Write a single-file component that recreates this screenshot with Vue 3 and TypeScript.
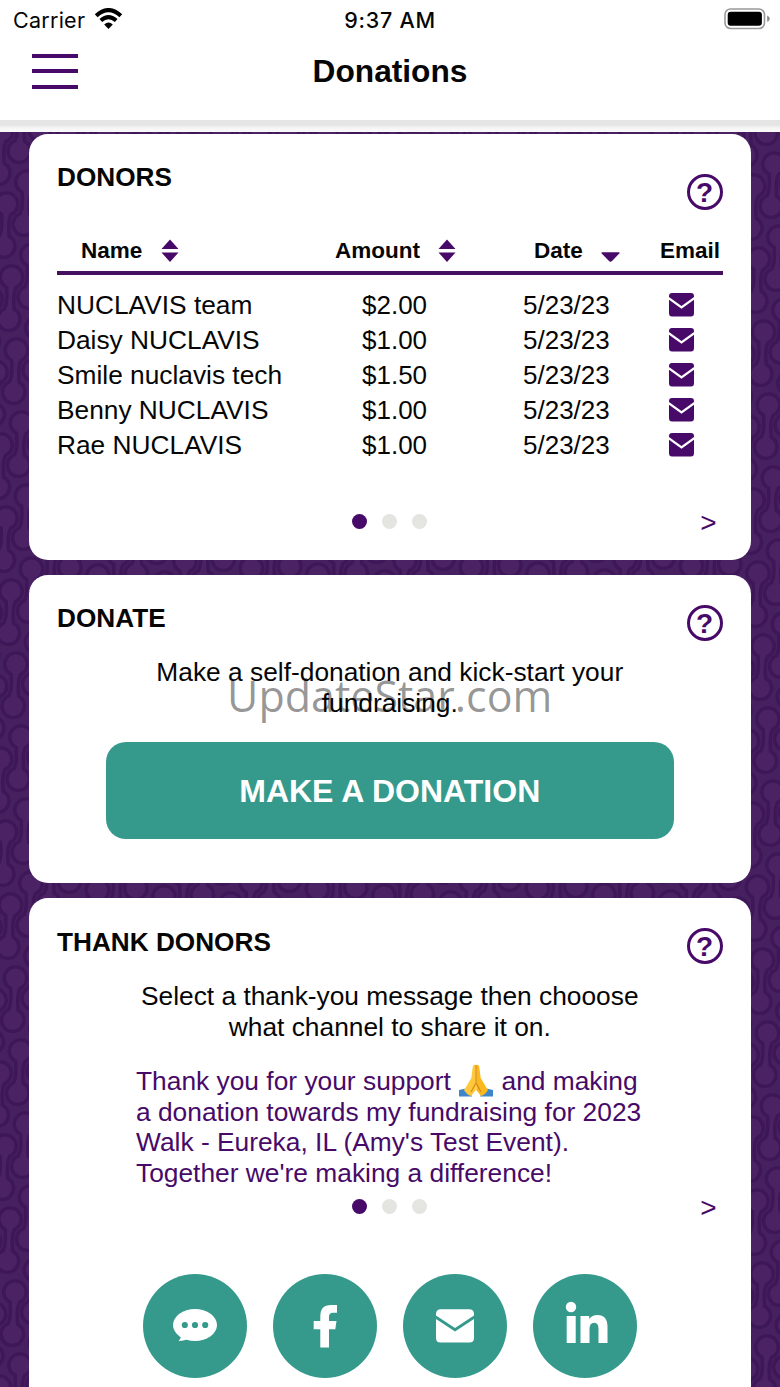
<script setup lang="ts">
interface Donor {
  name: string
  amount: string
  date: string
}

interface Point {
  x: number
  y: number
}

const donors: Donor[] = [
  { name: 'NUCLAVIS team', amount: '$2.00', date: '5/23/23' },
  { name: 'Daisy NUCLAVIS', amount: '$1.00', date: '5/23/23' },
  { name: 'Smile nuclavis tech', amount: '$1.50', date: '5/23/23' },
  { name: 'Benny NUCLAVIS', amount: '$1.00', date: '5/23/23' },
  { name: 'Rae NUCLAVIS', amount: '$1.00', date: '5/23/23' },
]

// Slanted lattice of chain links covering the backdrop.
const links: Point[] = []
for (let i = -10; i <= 55; i++) {
  for (let j = -10; j <= 40; j++) {
    const x = 12 + i * 20.5 + j * 5
    const y = 620 - i * 22 + (j - 9) * 73
    if (x > -20 && x < 800 && y > 70 && y < 1410) links.push({ x, y })
  }
}
</script>

<template>
  <div class="screen">
    <svg class="backdrop" width="780" height="1387" aria-hidden="true">
      <defs>
        <path id="link" d="M-4.800 10.200A11.200 11.200 0 1 1 4.600 10.300Q2.200 15 2.200 21T2.600 32.300A11.200 11.200 0 1 1-7 31.800Q-4.600 27-4.600 21T-4.800 10.200Z" />
      </defs>
      <rect width="780" height="1387" fill="#472060" />
      <g fill="#4b2364" stroke="#3e1758" stroke-width="3.400" stroke-linejoin="round">
        <use v-for="(p, n) in links" :key="n" href="#link" :x="p.x" :y="p.y" />
      </g>
    </svg>

    <header class="top">
      <div class="status">
        <span class="carrier">Carrier
          <svg class="wifi" width="29" height="22" viewBox="0 0 29 22">
            <path d="M2.200 7.700Q14.500-3.400 26.800 7.700" fill="none" stroke="#000" stroke-width="4.200" />
            <path d="M6.800 12.500Q14.500 5.800 22.200 12.500" fill="none" stroke="#000" stroke-width="4" />
            <path d="M10.200 16.500Q14.500 12.700 18.800 16.500L14.500 21Z" />
          </svg>
        </span>
        <span class="clock">9:37 AM</span>
        <svg class="battery" width="47" height="22" viewBox="0 0 47 22">
          <rect x="1" y="1" width="39.500" height="19.500" rx="5.500" fill="#fff" stroke="#999" stroke-width="1.600" />
          <rect x="3.700" y="3.700" width="34.200" height="14" rx="3" />
          <path d="M43.200 7.500Q45.800 8.700 45.800 10.800T43.200 14Z" fill="#888" />
        </svg>
      </div>
      <div class="bar">
        <div class="menu"><i /><i /><i /></div>
        <h1>Donations</h1>
      </div>
    </header>
    <div class="edge" />

    <main>
      <section class="card donors">
        <div class="head"><h2>DONORS</h2><span class="help">?</span></div>
        <div class="cols labels">
          <span class="first">Name
            <svg class="sort" width="18" height="24" viewBox="0 0 18 24"><path d="M9 .5L17.500 10H.5ZM.5 13.500H17.500L9 23Z" /></svg>
          </span>
          <span>Amount
            <svg class="sort" width="18" height="24" viewBox="0 0 18 24"><path d="M9 .5L17.500 10H.5ZM.5 13.500H17.500L9 23Z" /></svg>
          </span>
          <span>Date
            <svg class="sort" width="19" height="24" viewBox="0 0 19 24"><path d="M1 13.200H18Q19 13.500 18.300 14.500L11 22Q9.500 23.500 8 22L.7 14.500Q0 13.500 1 13.200Z" /></svg>
          </span>
          <span>Email</span>
        </div>
        <div class="rows">
          <div v-for="d in donors" :key="d.name" class="cols row">
            <span class="name">{{ d.name }}</span>
            <span>{{ d.amount }}</span>
            <span>{{ d.date }}</span>
            <svg class="mail" width="25" height="24" viewBox="0 0 25 24">
              <path d="M3 0H22Q25 0 25 3V4L12.500 13 0 4V3Q0 0 3 0ZM0 6.700L12.500 15.800 25 6.700V20Q25 23.500 22 23.500H3Q0 23.500 0 20Z" />
            </svg>
          </div>
        </div>
        <div class="pager"><div class="dots"><i class="on" /><i /><i /></div><span>&gt;</span></div>
      </section>

      <section class="card donate">
        <div class="head"><h2>DONATE</h2><span class="help">?</span></div>
        <p class="lead">Make a self-donation and kick-start your<br>fundraising.</p>
        <button type="button">MAKE A DONATION</button>
        <div class="watermark">UpdateStar.com</div>
      </section>

      <section class="card thank">
        <div class="head"><h2>THANK DONORS</h2><span class="help">?</span></div>
        <p class="lead">Select a thank-you message then chooose<br>what channel to share it on.</p>
        <p class="message">Thank you for your support
          <svg class="hands" width="34" height="33" viewBox="0 0 34 33" role="img" aria-label="Folded hands">
            <path d="M0 26L9 24 13 32.500H0ZM34 26L25 24 21 32.500H34Z" fill="#3f86c9" />
            <path d="M16.800 1Q14 0 13.600 4L12.300 14 7 23 5 26Q8 31 12 32L16.800 26Z" fill="#ffc83d" />
            <path d="M17.200 1Q20 0 20.400 4L21.700 14 27 23 29 26Q26 31 22 32L17.200 26Z" fill="#fbb91f" />
            <path d="M17 1V19L12 28M17 19L22 28" fill="none" stroke="#d78b16" stroke-width="1.200" />
          </svg>
          and making<br>a donation towards my fundraising for 2023<br>Walk - Eureka, IL (Amy's Test Event).<br>Together we're making a difference!</p>
        <div class="pager"><div class="dots"><i class="on" /><i /><i /></div><span>&gt;</span></div>
        <div class="share">
          <span>
            <svg width="104" height="104" viewBox="0 0 104 104">
              <ellipse cx="52" cy="51" rx="22" ry="16" fill="#fff" />
              <path d="M38 60Q38.500 64 35.500 67Q42 67 46 64Z" fill="#fff" />
              <g fill="#359a8c"><circle cx="41.800" cy="51" r="3.100" /><circle cx="52" cy="51" r="3.100" /><circle cx="62.200" cy="51" r="3.100" /></g>
            </svg>
          </span>
          <span>
            <svg width="104" height="104" viewBox="0 0 104 104">
              <path d="M47.300 73.500V55.200H40.700V47H47.300V42Q47.300 31 58 31H64V38.700H60Q56 38.700 56 42.500V47H63.500L62.300 55.200H56V73.500Z" fill="#fff" />
            </svg>
          </span>
          <span>
            <svg width="104" height="104" viewBox="0 0 104 104">
              <path d="M38 35.200H66Q71 35.200 71 40V41.500L52 54 33 41.500V40Q33 35.200 38 35.200ZM33 45L52 57.500 71 45V64Q71 68.500 66.500 68.500H37.500Q33 68.500 33 64Z" fill="#fff" />
            </svg>
          </span>
          <span>
            <svg width="104" height="104" viewBox="0 0 104 104">
              <circle cx="38" cy="33" r="5.200" fill="#fff" />
              <path d="M33.700 42H42.700V69H33.700ZM47.500 42H56.200V45Q59 41 64.500 41Q74.500 41 74.500 53V69H65.500V55Q65.500 48.800 61.200 48.800Q56.500 48.800 56.500 55V69H47.500Z" fill="#fff" />
            </svg>
          </span>
        </div>
      </section>
    </main>
  </div>
</template>

<style>
html,
body {
  margin: 0;
  overflow: hidden;
}
</style>

<style scoped>
.screen {
  position: relative;
  width: 780px;
  height: 1387px;
  overflow: hidden;
  font-family: "Liberation Sans", Arial, sans-serif;
  color: #060606;
}
.backdrop {
  position: absolute;
  inset: 0;
  z-index: -1;
}
h1, h2, p {
  margin: 0;
}
.top {
  height: 120px;
  background: #fff;
}
.status {
  display: grid;
  grid-template-columns: 1fr auto 1fr;
  height: 40px;
  padding: 0 9px 0 13px;
  line-height: 40px;
  font-family: Inter, sans-serif;
  font-size: 21.500px;
  box-sizing: border-box;
}
.carrier {
  display: flex;
  gap: 8.500px;
  letter-spacing: 0.250px;
}
.wifi {
  margin-top: 8px;
}
.clock {
  margin-right: 4px;
  font-weight: 500;
  letter-spacing: 0.750px;
}
.battery {
  justify-self: end;
  margin-top: 8px;
}
.bar {
  display: grid;
  grid-template-columns: 1fr auto 1fr;
  padding: 14px 32px 0;
}
.menu {
  display: flex;
  flex-direction: column;
  gap: 11.500px;
  width: 45.500px;
}
.menu i {
  height: 3.900px;
  background: #470a68;
}
h1 {
  margin-top: -1px;
  font-size: 31.700px;
  line-height: 36px;
}
.edge {
  height: 11.500px;
  background: linear-gradient(#e5e5e5 0 42%, #f5f5f5 65%, #fafafa);
}
main {
  display: flex;
  flex-direction: column;
  gap: 15px;
  padding: 2px 29px 0 28.500px;
}
.card {
  position: relative;
  flex: none;
  box-sizing: border-box;
  padding: 28px 28.500px 0;
  border-radius: 19px;
  background: #fff;
}
.donors { height: 426px; }
.donate { height: 308px; }
.thank {
  height: 540px;
  padding-top: 29px;
}
.head {
  display: flex;
  justify-content: space-between;
  height: 54px;
}
.donors .head {
  height: 67.500px;
}
h2 {
  font-size: 26.200px;
  line-height: 30px;
}
.help {
  box-sizing: border-box;
  width: 36px;
  height: 36px;
  margin-top: 2px;
  border: 3px solid #470a68;
  border-radius: 50%;
  color: #470a68;
  font-size: 28px;
  font-weight: bold;
  line-height: 31px;
  text-align: center;
}
.donors .help {
  margin-top: 12px;
}
.thank .help {
  margin-top: 1px;
}
.cols {
  display: grid;
}
.labels {
  grid-template-columns: 278px 199px 126px 1fr;
  height: 42px;
  border-bottom: 4px solid #45105f;
  font-size: 22.500px;
  font-weight: bold;
  line-height: 43px;
}
.labels span {
  display: flex;
  gap: 18px;
}
.labels .first {
  gap: 19px;
  padding-left: 24px;
}
.sort {
  margin-top: 10px;
  fill: #470a68;
}
.rows {
  padding-top: 12px;
}
.row {
  grid-template-columns: 305px 161px 146px 1fr;
  height: 35px;
  font-size: 26px;
  line-height: 36px;
}
.name {
  font-size: 26.300px;
}
.mail {
  margin-top: 6px;
  fill: #470a68;
}
.pager {
  display: grid;
  grid-template-columns: 1fr auto 1fr;
  align-items: center;
  height: 30px;
  margin-top: 45px;
}
.dots {
  grid-column: 2;
  display: flex;
  gap: 15px;
  margin-top: -2.500px;
}
.dots i {
  width: 15px;
  height: 15px;
  border-radius: 50%;
  background: #e4e4e1;
}
.dots .on {
  background: #470a68;
}
.pager span {
  justify-self: end;
  padding-right: 6px;
  color: #470a68;
  font-size: 28px;
}
.lead {
  padding-top: 0.600px;
  font-size: 26.330px;
  line-height: 30.400px;
  text-align: center;
}
button {
  display: block;
  width: 568px;
  height: 97px;
  margin: 24.400px auto 0;
  padding: 2px 0 0;
  border: 0;
  border-radius: 20px;
  background: #359a8c;
  color: #fff;
  font: bold 32px "Liberation Sans", Arial, sans-serif;
}
.watermark {
  position: absolute;
  top: 92px;
  left: 0;
  width: 100%;
  color: rgba(0, 0, 0, 0.42);
  font-family: "Open Sans", sans-serif;
  font-size: 43px;
  line-height: 58px;
  text-align: center;
}
.message {
  margin: 24px 0 0 79px;
  color: #470a68;
  font-size: 26.350px;
  line-height: 30.300px;
  white-space: nowrap;
}
.hands {
  height: 33px;
  margin: -5px 1px -7px 1px;
  vertical-align: -7px;
  position: relative;
  top: -6.500px;
}
.thank .pager {
  margin-top: 4.400px;
}
.share {
  display: flex;
  justify-content: center;
  gap: 26px;
  margin-top: 51.500px;
}
.share span {
  width: 104px;
  height: 104px;
  border-radius: 50%;
  background: #359a8c;
}
</style>
